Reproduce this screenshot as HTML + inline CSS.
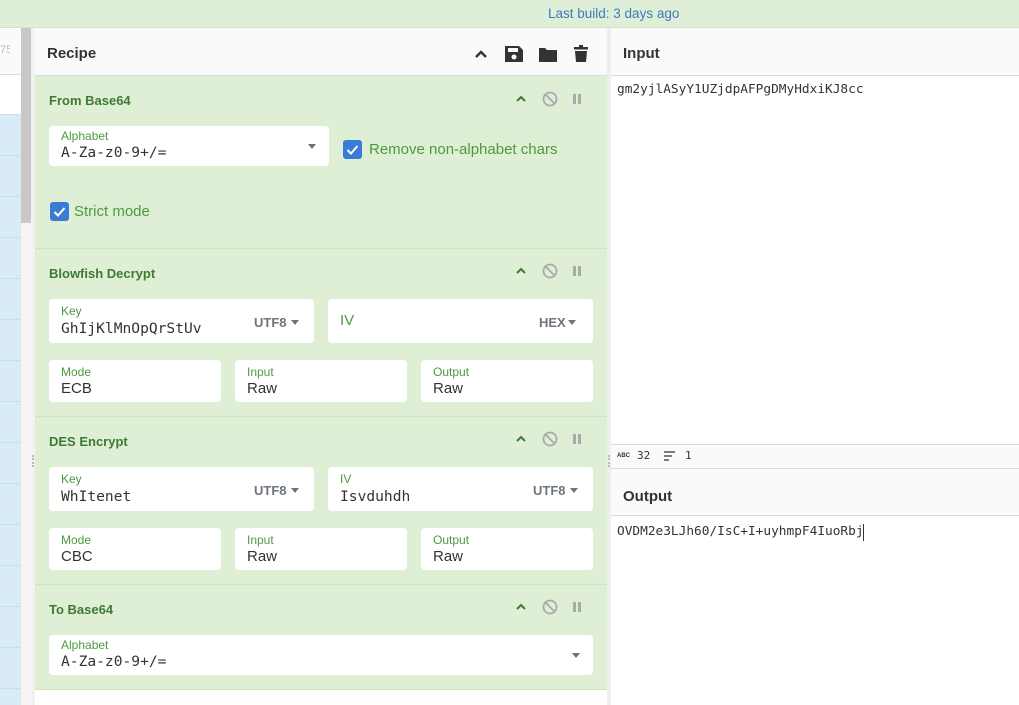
<!DOCTYPE html><html><head><style>
*{box-sizing:border-box;margin:0;padding:0}
body{width:1019px;height:705px;overflow:hidden;position:relative;background:#fff;font-family:"Liberation Sans",sans-serif}
.a{position:absolute}
.top{left:0;top:0;width:1019px;height:28px;background:#dfeed6;border-bottom:1px solid #d3e2cb}
.sec{left:35px;width:572px;background:#dfefd6;border-bottom:1px solid #cde4c1}
.t{font-weight:bold;font-size:13px;color:#3f7a33}
.box{background:#fff;border-radius:4px;position:absolute}
.lb{position:absolute;left:12px;top:5px;font-size:12px;color:#4d9a3e}
.v{position:absolute;left:12px;top:20px;font-size:15px;color:#333}
.m{font-family:"DejaVu Sans Mono","Liberation Mono",monospace;font-size:14.6px;top:21px}
.dd{position:absolute;font-size:13px;color:#6c757d;font-weight:bold}
.car{position:absolute;width:0;height:0;border-left:4px solid transparent;border-right:4px solid transparent;border-top:5px solid #6c757d}
.cb{position:absolute;width:19px;height:19px;background:#3a7bd5;border-radius:3px}
.mono{font-family:"DejaVu Sans Mono","Liberation Mono",monospace;font-size:12.8px;color:#333}
</style></head><body>
<div class="a top"></div>
<div class="a" style="left:548px;top:6px;font-size:13.5px;color:#3a7bbf">Last build: 3 days ago</div>
<div class="a" style="left:0;top:29px;width:21px;height:676px;background:#fff"></div>
<div class="a" style="left:0;top:29px;width:21px;height:46px;background:#fafafa;border-bottom:1px solid #ddd"></div>
<div class="a" style="left:0;top:44px;font-size:11px;color:#bbb;width:10px;overflow:hidden">75</div>
<div class="a" style="left:0;top:114px;width:21px;height:591px;background:repeating-linear-gradient(#d9ebf7 0,#d9ebf7 40px,#bfe0ee 40px,#bfe0ee 41px);border-top:1px solid #c9dfe9"></div>
<div class="a" style="left:21px;top:28px;width:10px;height:677px;background:#f5f5f5"></div>
<div class="a" style="left:21px;top:28px;width:10px;height:195px;background:#c8c8c8"></div>
<div class="a" style="left:31px;top:28px;width:4px;height:677px;background:#f2f2f2"></div>
<div class="a" style="left:35px;top:28px;width:572px;height:48px;background:#fafafa;border-bottom:1px solid #ddd"></div>
<div class="a" style="left:47px;top:45px;font-size:15px;font-weight:bold;color:#333">Recipe</div>
<svg class="a" style="left:472px;top:44px" width="120" height="20" viewBox="0 0 120 20">
<path d="M4 13 L9 8 L14 13" stroke="#333" stroke-width="2.4" fill="none"/>
<path d="M33 2 h14 l4 4 v12 h-18 z" fill="#333"/><rect x="36" y="4" width="10" height="4" fill="#fafafa"/><circle cx="42" cy="13" r="2.5" fill="#fafafa"/>
<path d="M67 4 h6 l2 2 h10 v12 h-18 z" fill="#333"/>
<rect x="102" y="3" width="14" height="2.5" fill="#333"/><rect x="107" y="1" width="4" height="2" fill="#333"/><path d="M103 7 h12 l-1 11 h-10 z" fill="#333"/>
</svg>
<div class="a sec" style="top:76px;height:173px"></div>
<div class="a sec" style="top:249px;height:168px"></div>
<div class="a sec" style="top:417px;height:168px"></div>
<div class="a sec" style="top:585px;height:105px"></div>
<div class="a" style="left:35px;top:690px;width:572px;height:15px;background:#fff"></div>
<div class="a t" style="left:49px;top:93px">From Base64</div>
<div class="a t" style="left:49px;top:266px">Blowfish Decrypt</div>
<div class="a t" style="left:49px;top:434px">DES Encrypt</div>
<div class="a t" style="left:49px;top:602px">To Base64</div>
<svg class="a" style="left:514px;top:89px" width="80" height="20"><path d="M3 12 L7 8 L11 12" stroke="#3f7a33" stroke-width="2" fill="none"/><circle cx="36" cy="10" r="6.5" stroke="#aaa" stroke-width="1.8" fill="none"/><path d="M31.5 5.5 L40.5 14.5" stroke="#aaa" stroke-width="1.8"/><rect x="59" y="5" width="3" height="10" fill="#aaa"/><rect x="64" y="5" width="3" height="10" fill="#aaa"/></svg>
<svg class="a" style="left:514px;top:261px" width="80" height="20"><path d="M3 12 L7 8 L11 12" stroke="#3f7a33" stroke-width="2" fill="none"/><circle cx="36" cy="10" r="6.5" stroke="#aaa" stroke-width="1.8" fill="none"/><path d="M31.5 5.5 L40.5 14.5" stroke="#aaa" stroke-width="1.8"/><rect x="59" y="5" width="3" height="10" fill="#aaa"/><rect x="64" y="5" width="3" height="10" fill="#aaa"/></svg>
<svg class="a" style="left:514px;top:429px" width="80" height="20"><path d="M3 12 L7 8 L11 12" stroke="#3f7a33" stroke-width="2" fill="none"/><circle cx="36" cy="10" r="6.5" stroke="#aaa" stroke-width="1.8" fill="none"/><path d="M31.5 5.5 L40.5 14.5" stroke="#aaa" stroke-width="1.8"/><rect x="59" y="5" width="3" height="10" fill="#aaa"/><rect x="64" y="5" width="3" height="10" fill="#aaa"/></svg>
<svg class="a" style="left:514px;top:597px" width="80" height="20"><path d="M3 12 L7 8 L11 12" stroke="#3f7a33" stroke-width="2" fill="none"/><circle cx="36" cy="10" r="6.5" stroke="#aaa" stroke-width="1.8" fill="none"/><path d="M31.5 5.5 L40.5 14.5" stroke="#aaa" stroke-width="1.8"/><rect x="59" y="5" width="3" height="10" fill="#aaa"/><rect x="64" y="5" width="3" height="10" fill="#aaa"/></svg>
<div class="box" style="left:49px;top:126px;width:280px;height:40px"><div class="lb" style="top:3px">Alphabet</div><div class="v m" style="top:18px">A-Za-z0-9+/=</div><div class="car" style="left:259px;top:18px"></div></div>
<div class="cb" style="left:343px;top:140px"><svg width="19" height="19"><path d="M4.5 10 L8 13.5 L14.5 6" stroke="#fff" stroke-width="2" fill="none"/></svg></div>
<div class="a" style="left:369px;top:141px;font-size:15px;color:#4d9a3e">Remove non-alphabet chars</div>
<div class="cb" style="left:50px;top:202px"><svg width="19" height="19"><path d="M4.5 10 L8 13.5 L14.5 6" stroke="#fff" stroke-width="2" fill="none"/></svg></div>
<div class="a" style="left:74px;top:203px;font-size:15px;color:#4d9a3e">Strict mode</div>
<div class="box" style="left:49px;top:299px;width:265px;height:44px"><div class="lb">Key</div><div class="v m">GhIjKlMnOpQrStUv</div><div class="dd" style="left:205px;top:16px">UTF8</div><div class="car" style="left:242px;top:21px"></div></div>
<div class="box" style="left:328px;top:299px;width:265px;height:44px"><div class="a" style="left:12px;top:13px;font-size:15px;color:#4d9a3e">IV</div><div class="dd" style="left:211px;top:16px">HEX</div><div class="car" style="left:240px;top:21px"></div></div>
<div class="box" style="left:49px;top:360px;width:172px;height:42px"><div class="lb">Mode</div><div class="v">ECB</div></div>
<div class="box" style="left:235px;top:360px;width:172px;height:42px"><div class="lb">Input</div><div class="v">Raw</div></div>
<div class="box" style="left:421px;top:360px;width:172px;height:42px"><div class="lb">Output</div><div class="v">Raw</div></div>
<div class="box" style="left:49px;top:467px;width:265px;height:44px"><div class="lb">Key</div><div class="v m">WhItenet</div><div class="dd" style="left:205px;top:16px">UTF8</div><div class="car" style="left:242px;top:21px"></div></div>
<div class="box" style="left:328px;top:467px;width:265px;height:44px"><div class="lb">IV</div><div class="v m">Isvduhdh</div><div class="dd" style="left:205px;top:16px">UTF8</div><div class="car" style="left:242px;top:21px"></div></div>
<div class="box" style="left:49px;top:528px;width:172px;height:42px"><div class="lb">Mode</div><div class="v">CBC</div></div>
<div class="box" style="left:235px;top:528px;width:172px;height:42px"><div class="lb">Input</div><div class="v">Raw</div></div>
<div class="box" style="left:421px;top:528px;width:172px;height:42px"><div class="lb">Output</div><div class="v">Raw</div></div>
<div class="box" style="left:49px;top:635px;width:544px;height:40px"><div class="lb" style="top:3px">Alphabet</div><div class="v m" style="top:18px">A-Za-z0-9+/=</div><div class="car" style="left:523px;top:18px"></div></div>
<div class="a" style="left:607px;top:28px;width:4px;height:677px;background:#eee"></div>
<div class="a" style="left:32px;top:455px;width:2px;height:12px;border-left:2px dotted #bbb"></div>
<div class="a" style="left:608px;top:455px;width:2px;height:12px;border-left:2px dotted #bbb"></div>
<div class="a" style="left:611px;top:28px;width:408px;height:48px;background:#fafafa;border-bottom:1px solid #ddd"></div>
<div class="a" style="left:623px;top:45px;font-size:15px;font-weight:bold;color:#333">Input</div>
<div class="a mono" style="left:617px;top:82px">gm2yjlASyY1UZjdpAFPgDMyHdxiKJ8cc</div>
<div class="a" style="left:611px;top:444px;width:408px;height:25px;background:#fafafa;border-top:1px solid #ddd;border-bottom:1px solid #ddd"></div>
<div class="a" style="left:617px;top:453px;font-size:6px;font-weight:bold;color:#333">ABC</div>
<div class="a mono" style="left:637px;top:449px;font-size:11px">32</div>
<svg class="a" style="left:664px;top:451px" width="14" height="10"><path d="M0 1h11M0 5h8M0 9h5" stroke="#333" stroke-width="1.3"/></svg>
<div class="a mono" style="left:685px;top:449px;font-size:11px">1</div>
<div class="a" style="left:611px;top:469px;width:408px;height:47px;background:#fafafa;border-bottom:1px solid #ddd"></div>
<div class="a" style="left:623px;top:488px;font-size:15px;font-weight:bold;color:#333">Output</div>
<div class="a mono" style="left:617px;top:524px">OVDM2e3LJh60/IsC+I+uyhmpF4IuoRbj</div>
<div class="a" style="left:863px;top:524px;width:1px;height:17px;background:#333"></div>
</body></html>
